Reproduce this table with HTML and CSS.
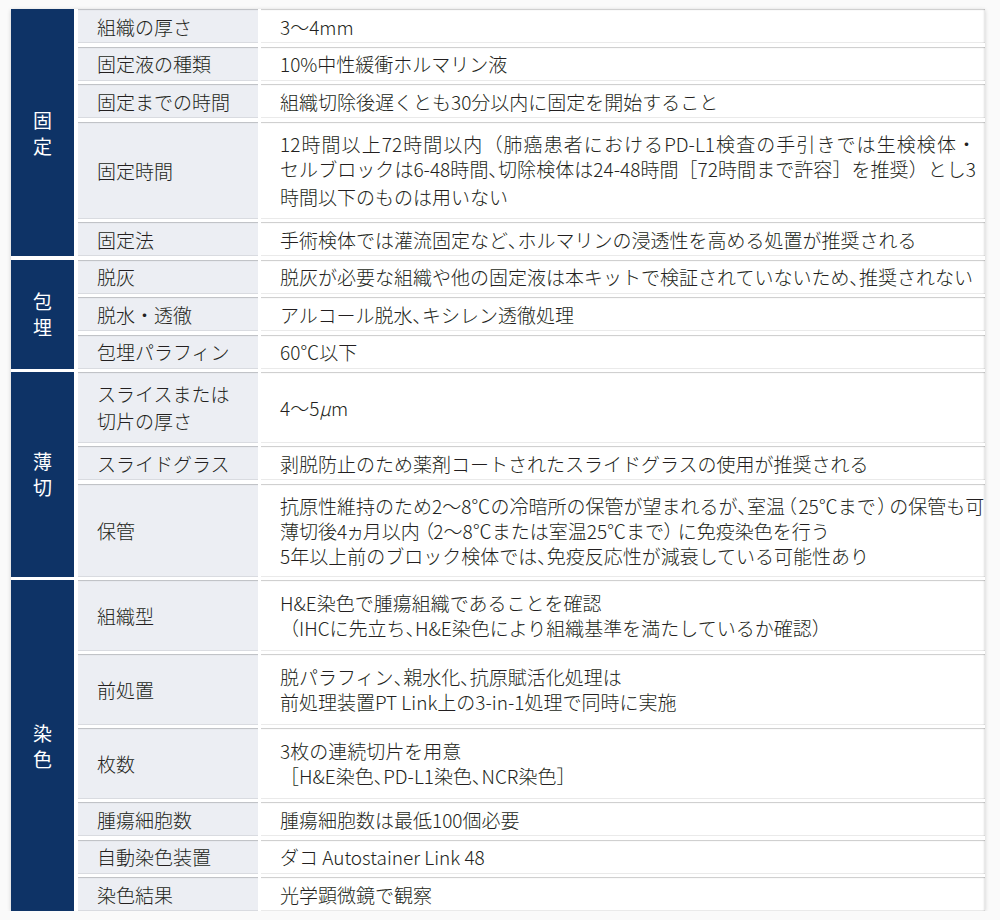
FILE: index.html
```html
<!DOCTYPE html>
<html lang="ja">
<head>
<meta charset="utf-8">
<title>組織標本作製条件</title>
<link rel="stylesheet" href="styles.css">
</head>
<body>
<div class="sheet">
  <section class="group">
    <div class="cat"><p>固<br>定</p></div>
    <div class="rows">
      <div class="row"><div class="label"><p>組織の厚さ</p></div><div class="value"><p>3〜4mm</p></div></div>
      <div class="row"><div class="label"><p>固定液の種類</p></div><div class="value"><p>10%中性緩衝ホルマリン液</p></div></div>
      <div class="row"><div class="label"><p>固定までの時間</p></div><div class="value"><p>組織切除後遅くとも30分以内に固定を開始すること</p></div></div>
      <div class="row tall"><div class="label"><p>固定時間</p></div><div class="value"><div class="block"><p class="jl">12時間以上72時間以内（肺癌患者におけるPD-L1検査の手引きでは生検検体・</p><p class="jl">セルブロックは6-48時間<span class="pn">、</span>切除検体は24-48時間［72時間まで許容］を推奨）とし3</p><p class="gap">時間以下のものは用いない</p></div></div></div>
      <div class="row"><div class="label"><p>固定法</p></div><div class="value"><p>手術検体では灌流固定など<span class="pn">、</span>ホルマリンの浸透性を高める処置が推奨される</p></div></div>
    </div>
  </section>
  <section class="group">
    <div class="cat"><p>包<br>埋</p></div>
    <div class="rows">
      <div class="row"><div class="label"><p>脱灰</p></div><div class="value"><p>脱灰が必要な組織や他の固定液は本キットで検証されていないため<span class="pn">、</span>推奨されない</p></div></div>
      <div class="row"><div class="label"><p>脱水・透徹</p></div><div class="value"><p>アルコール脱水<span class="pn">、</span>キシレン透徹処理</p></div></div>
      <div class="row"><div class="label"><p>包埋パラフィン</p></div><div class="value"><p>60<span class="pn">℃</span>以下</p></div></div>
    </div>
  </section>
  <section class="group">
    <div class="cat"><p>薄<br>切</p></div>
    <div class="rows">
      <div class="row two"><div class="label"><p class="loose">スライスまたは<br>切片の厚さ</p></div><div class="value"><p>4〜5<i>μ</i>m</p></div></div>
      <div class="row"><div class="label"><p>スライドグラス</p></div><div class="value"><p>剥脱防止のため薬剤コートされたスライドグラスの使用が推奨される</p></div></div>
      <div class="row three"><div class="label"><p>保管</p></div><div class="value"><p>抗原性維持のため2<span class="pn">〜</span>8<span class="pn">℃</span>の冷暗所の保管が望まれるが<span class="pn">、</span>室温<span class="pn sp">（</span>25<span class="pn">℃</span>まで<span class="pn sp">）</span>の保管も可<br>薄切後4<span class="pn">ヵ</span>月以内 <span class="pn">（</span>2<span class="pn">〜</span>8<span class="pn">℃</span>または室温25<span class="pn">℃</span>まで<span class="pn">）</span> に免疫染色を行う<br>5年以上前のブロック検体では<span class="pn">、</span>免疫反応性が減衰している可能性あり</p></div></div>
    </div>
  </section>
  <section class="group">
    <div class="cat"><p>染<br>色</p></div>
    <div class="rows">
      <div class="row two"><div class="label"><p>組織型</p></div><div class="value"><p>H&amp;E染色で腫瘍組織であることを確認<br>（IHCに先立ち<span class="pn">、</span>H&amp;E染色により組織基準を満たしているか確認）</p></div></div>
      <div class="row two"><div class="label"><p>前処置</p></div><div class="value"><p>脱パラフィン<span class="pn">、</span>親水化<span class="pn">、</span>抗原賦活化処理は<br>前処理装置PT Link上の3-in-1処理で同時に実施</p></div></div>
      <div class="row two"><div class="label"><p>枚数</p></div><div class="value"><p>3枚の連続切片を用意<br>［H&amp;E染色<span class="pn">、</span>PD-L1染色<span class="pn">、</span>NCR染色］</p></div></div>
      <div class="row"><div class="label"><p>腫瘍細胞数</p></div><div class="value"><p>腫瘍細胞数は最低100個必要</p></div></div>
      <div class="row"><div class="label"><p>自動染色装置</p></div><div class="value"><p>ダコ Autostainer Link 48</p></div></div>
      <div class="row"><div class="label"><p>染色結果</p></div><div class="value"><p>光学顕微鏡で観察</p></div></div>
    </div>
  </section>
</div>
</body>
</html>
```

FILE: styles.css
```css
html, body {
  margin: 0;
  padding: 0;
}
body {
  background: #fafafa;
  font-family: "Noto Sans CJK JP", "Noto Sans", sans-serif;
  font-weight: 300;
  color: #231f20;
  font-size: 19px;
  line-height: 25px;
}
p {
  margin: 0;
}
.sheet {
  margin: 9px 0 0 11px;
  width: 974px;
  display: flex;
  flex-direction: column;
  gap: 3.5px;
  background: #fff;
  box-shadow: 0 1px 4px rgba(0, 0, 0, 0.18);
}
.group {
  display: flex;
  gap: 4px;
}
.cat {
  width: 63px;
  flex: none;
  background: #0e3366;
  color: #fff;
  display: flex;
  align-items: center;
  justify-content: center;
  font-size: 19px;
  line-height: 26px;
  font-weight: 400;
}
.rows {
  flex: 1;
  min-width: 0;
  display: flex;
  flex-direction: column;
  gap: 3.5px;
}
.row {
  display: grid;
  grid-template-columns: 180px minmax(0, 1fr);
  column-gap: 3px;
  min-height: 34px;
}
.row.two {
  min-height: 70.5px;
}
.row.three {
  min-height: 93px;
}
.row.tall {
  min-height: 97px;
}
.label,
.value {
  display: flex;
  align-items: center;
  padding: 0 0 0 19px;
  min-width: 0;
  box-shadow: inset 0 2px 1px -1px rgba(0, 0, 0, 0.2), inset 0 -1px 0 rgba(0, 0, 0, 0.08);
}
.label {
  background: #eceef3;
}
.value {
  background: #fff;
  white-space: nowrap;
  overflow: hidden;
  box-shadow: inset 0 2px 1px -1px rgba(0, 0, 0, 0.2), inset 0 -1px 0 rgba(0, 0, 0, 0.08), inset -2px 0 2px -1px rgba(0, 0, 0, 0.12);
}
.pn {
  font-feature-settings: "palt";
}
.sp {
  margin: 0 2px;
}
.block {
  width: 696px;
}
.jl {
  text-align: justify;
  text-align-last: justify;
}
.loose {
  line-height: 27px;
}
.gap {
  margin-top: 3px;
}
i {
  font-style: italic;
}
```
